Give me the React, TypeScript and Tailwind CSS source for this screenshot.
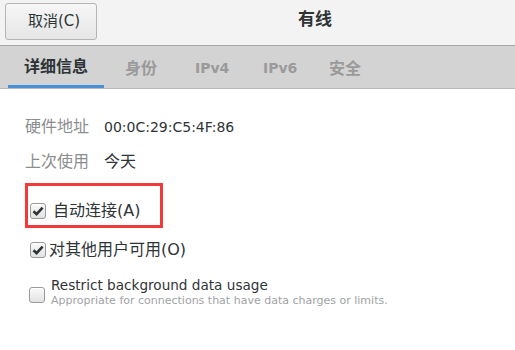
import React from 'react';

const tabs = ['详细信息', '身份', 'IPv4', 'IPv6', '安全'];

function Check({ checked }: { checked: boolean }) {
    return (
        <span className="w-[16px] h-[16px] shrink-0 rounded-[3px] border border-[#9a9a9a] bg-gradient-to-b from-[#fafafa] to-[#e2e2e2] flex items-center justify-center shadow-[inset_0_1px_0_white]">
            {checked && (
                <svg width="12" height="12" viewBox="0 0 12 12">
                    <path d="M1.5 6.2 L4.6 9.2 L10.6 2.6" fill="none" stroke="#2e3436" strokeWidth="2.6" strokeLinejoin="miter" />
                </svg>
            )}
        </span>
    );
}

export default function App() {
    const cjk = { fontFamily: '"DejaVu Sans", "Noto Sans CJK SC", sans-serif' };

    return (
        <div className="w-[515px] h-[350px] bg-white overflow-hidden text-[#2e3436]" style={cjk}>
            {/* header bar */}
            <div className="h-[46px] bg-[#f3f3f3] border-b border-[#a8a8a8] flex items-center pl-[5px]">
                <button className="w-[92px] h-[37px] mb-[3px] pl-[6px] rounded-[3px] border border-[#b4b4b4] bg-gradient-to-b from-[#f6f6f6] to-[#e6e6e6] text-[15px] text-[#2e3436]">
                    取消(C)
                </button>
                <div className="flex-1 flex justify-center pl-[18px] pb-[5px]">
                    <span className="text-[17px] font-bold">有线</span>
                </div>
            </div>

            {/* tabs */}
            <div className="h-[43px] bg-[#d3d3d3] border-b border-[#b9b9b9] flex items-stretch pl-[8px] text-[16px] font-bold">
                <div className="w-[96px] flex items-center justify-center border-b-[3px] border-[#4a90d9] pt-[3px]">
                    {tabs[0]}
                </div>
                <div className="flex items-stretch text-[#9a9a9a]">
                    <div className="w-[34px] ml-[21px] flex items-center pt-[3px]">{tabs[1]}</div>
                    <div className="w-[34px] ml-[36px] flex items-center pt-[3px] text-[14px]">{tabs[2]}</div>
                    <div className="w-[34px] ml-[34px] flex items-center pt-[3px] text-[14px]">{tabs[3]}</div>
                    <div className="w-[34px] ml-[32px] flex items-center pt-[3px]">{tabs[4]}</div>
                </div>
            </div>

            {/* content */}
            <div className="pl-[25px] pt-[27px]">
                <div className="flex items-center h-[22px]">
                    <span className="w-[79px] text-[16px] text-[#8b8e8f]">硬件地址</span>
                    <span className="text-[14px]">00:0C:29:C5:4F:86</span>
                </div>
                <div className="flex items-center h-[22px] mt-[13px] text-[16px]">
                    <span className="w-[79px] text-[#8b8e8f]">上次使用</span>
                    <span>今天</span>
                </div>

                <div className="mt-[10px] w-[138px] h-[45px] border-[3px] border-[#f23a3a] flex items-center pl-[2px] pt-[11px]">
                    <Check checked />
                    <span className="ml-[7px] text-[16px]">自动连接(A)</span>
                </div>

                <div className="mt-[13px] pl-[5px] flex items-center h-[18px]">
                    <Check checked />
                    <span className="ml-[3px] text-[16px]">对其他用户可用(O)</span>
                </div>

                <div className="mt-[17px] pl-[4px] flex">
                    <div className="pt-[11px]">
                        <Check checked={false} />
                    </div>
                    <div className="ml-[6px] flex flex-col">
                        <span className="text-[13.6px] leading-[18px]">Restrict background data usage</span>
                        <span className="text-[11px] leading-[14px] text-[#a0a3a4]">
                            Appropriate for connections that have data charges or limits.
                        </span>
                    </div>
                </div>
            </div>
        </div>
    );
}
